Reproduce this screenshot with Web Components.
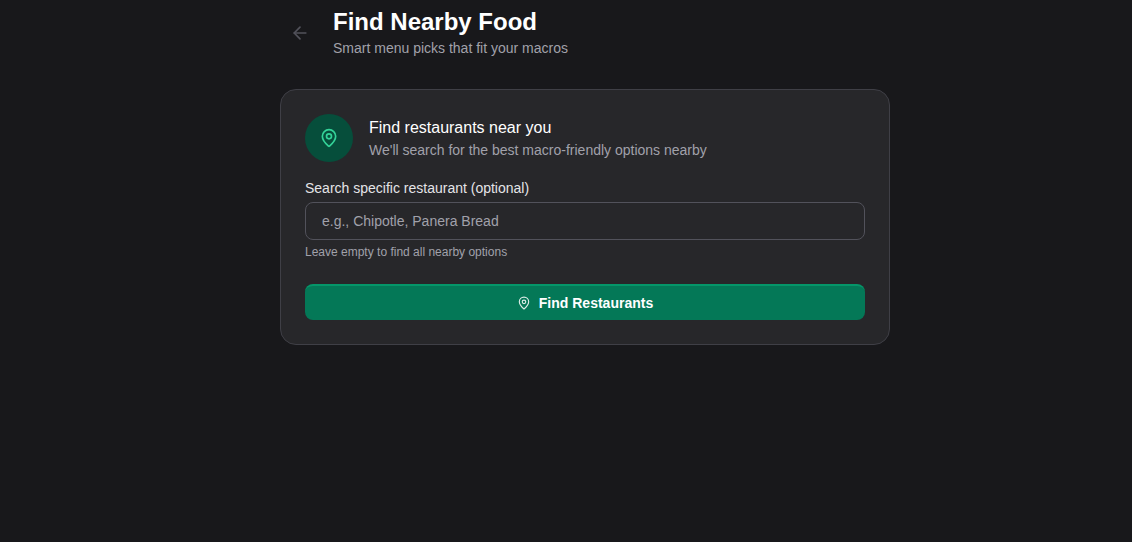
<!DOCTYPE html>
<html>
<head>
<meta charset="utf-8">
<title>Find Nearby Food</title>
<style>
    html, body {
        margin: 0;
        height: 100%;
        background: #18181b;
        color: #fafafa;
        font-family: "Liberation Sans", Arial, sans-serif;
    }
</style>
</head>
<body>
<food-page>
    <page-header title="Find Nearby Food" subtitle="Smart menu picks that fit your macros"></page-header>
    <search-card></search-card>
</food-page>

<script>
const PIN_PATH = `
    <path d="M20 10c0 4.993-5.539 10.193-7.399 11.799a1 1 0 0 1-1.202 0C9.539 20.193 4 14.993 4 10a8 8 0 0 1 16 0"/>
    <circle cx="12" cy="10" r="3"/>`;

class FoodPage extends HTMLElement{
    constructor(){
        super();
        this.attachShadow({mode: 'open'});
        this.shadowRoot.innerHTML=`
            <style>
                :host {
                    display: block;
                    box-sizing: border-box;
                    width: 610px;
                    margin-left: 280px;
                    padding-top: 6px;
                }
            </style>
            <slot></slot>
        `;
    }
}

class PageHeader extends HTMLElement{
    constructor(){
        super();
        this.attachShadow({mode: 'open'});
        this.shadowRoot.innerHTML=`
            <style>
                :host {
                    display: flex;
                    align-items: center;
                    gap: 13px;
                    margin-bottom: 31px;
                }
                button {
                    display: flex;
                    align-items: center;
                    justify-content: center;
                    width: 40px;
                    height: 40px;
                    padding: 0;
                    margin-top: 2px;
                    border: 0;
                    background: none;
                    color: #52525b;
                }
                h1 {
                    margin: 0;
                    font-size: 24px;
                    line-height: 32px;
                    font-weight: 700;
                    color: #fff;
                }
                p {
                    margin: 0;
                    font-size: 14px;
                    line-height: 20px;
                    color: #a1a1aa;
                }
            </style>
            <button aria-label="Back">
                <svg width="20" height="20" viewBox="0 0 24 24" fill="none" stroke="currentColor" stroke-width="2" stroke-linecap="round" stroke-linejoin="round">
                    <path d="m12 19-7-7 7-7"/><path d="M19 12H5"/>
                </svg>
            </button>
            <div>
                <h1></h1>
                <p></p>
            </div>
        `;
    }

    connectedCallback(){
        this.shadowRoot.querySelector('h1').textContent = this.getAttribute('title');
        this.shadowRoot.querySelector('p').textContent = this.getAttribute('subtitle');
    }
}

class SearchCard extends HTMLElement{
    constructor(){
        super();
        this.attachShadow({mode: 'open'});
        this.shadowRoot.innerHTML=`
            <style>
                :host {
                    display: block;
                    box-sizing: border-box;
                    padding: 24px;
                    height: 256px;
                    background: #27272a;
                    border: 1px solid #3f3f46;
                    border-radius: 16px;
                }
                .intro {
                    display: flex;
                    align-items: center;
                    gap: 16px;
                    margin-bottom: 16px;
                }
                .badge {
                    display: flex;
                    align-items: center;
                    justify-content: center;
                    width: 48px;
                    height: 48px;
                    border-radius: 50%;
                    background: #065f46;
                    background: #064e3b;
                    color: #34d399;
                }
                h3 {
                    margin: 0;
                    font-size: 16px;
                    line-height: 24px;
                    font-weight: 500;
                    color: #fff;
                }
                .intro p {
                    margin: 0;
                    font-size: 14px;
                    line-height: 20px;
                    color: #a1a1aa;
                }
                label {
                    display: block;
                    margin-bottom: 4px;
                    font-size: 14px;
                    line-height: 20px;
                    color: #e4e4e7;
                }
                input {
                    display: block;
                    box-sizing: border-box;
                    width: 100%;
                    height: 38px;
                    padding: 0 16px;
                    background: #27272a;
                    border: 1px solid #52525b;
                    border-radius: 8px;
                    outline: none;
                    font: 14px "Liberation Sans", Arial, sans-serif;
                    color: #fff;
                }
                input::placeholder {
                    color: #a1a1aa;
                    opacity: 1;
                }
                .hint {
                    margin: 4px 0 0;
                    font-size: 12px;
                    line-height: 16px;
                    color: #a1a1aa;
                }
                button {
                    display: flex;
                    align-items: center;
                    justify-content: center;
                    gap: 8px;
                    box-sizing: border-box;
                    width: 100%;
                    height: 36px;
                    margin-top: 24px;
                    padding: 0;
                    background: #047857;
                    border: 0;
                    border-top: 2px solid #059669;
                    border-radius: 8px;
                    font: 700 14px "Liberation Sans", Arial, sans-serif;
                    color: #fff;
                }
            </style>
            <div class="intro">
                <div class="badge">
                    <svg width="20" height="20" viewBox="0 0 24 24" fill="none" stroke="currentColor" stroke-width="2" stroke-linecap="round" stroke-linejoin="round">${PIN_PATH}</svg>
                </div>
                <div>
                    <h3>Find restaurants near you</h3>
                    <p>We'll search for the best macro-friendly options nearby</p>
                </div>
            </div>
            <label for="q">Search specific restaurant (optional)</label>
            <input id="q" type="text" placeholder="e.g., Chipotle, Panera Bread">
            <p class="hint">Leave empty to find all nearby options</p>
            <button>
                <svg width="14" height="14" viewBox="0 0 24 24" fill="none" stroke="currentColor" stroke-width="2" stroke-linecap="round" stroke-linejoin="round" style="opacity:.85">${PIN_PATH}</svg>
                Find Restaurants
            </button>
        `;
    }
}

customElements.define('food-page', FoodPage);
customElements.define('page-header', PageHeader);
customElements.define('search-card', SearchCard);
</script>
</body>
</html>
